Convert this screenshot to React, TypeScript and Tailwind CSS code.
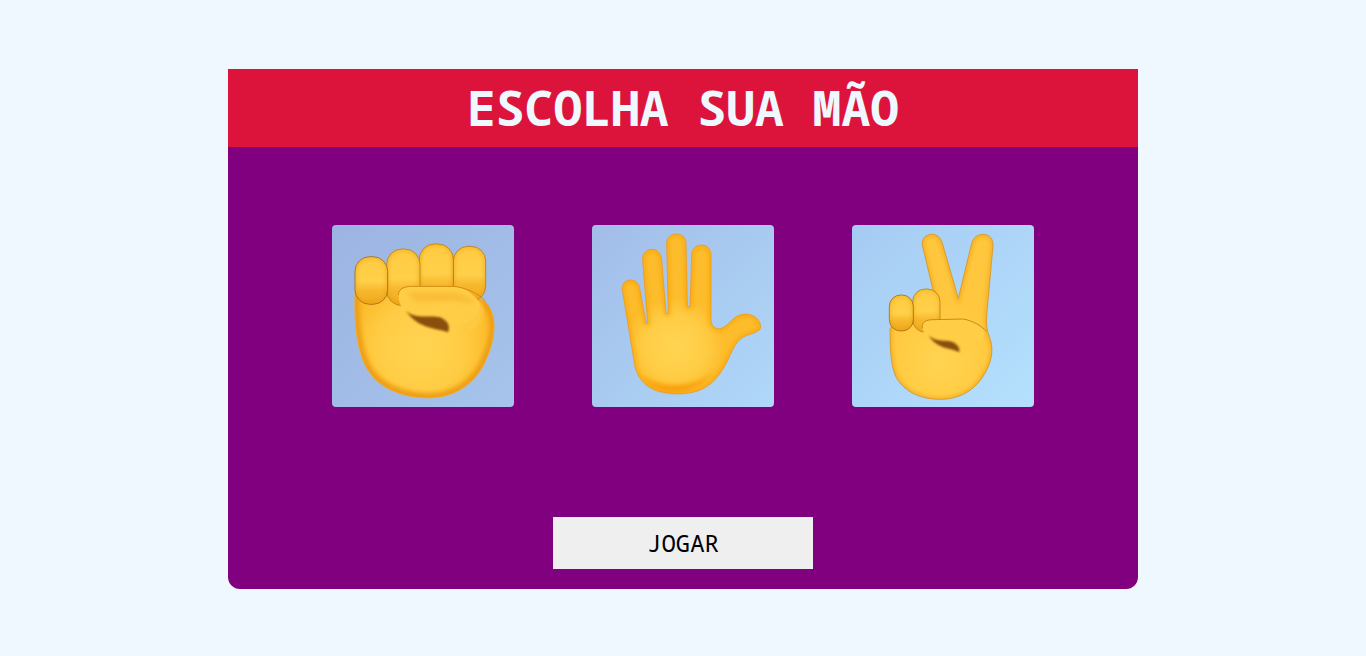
const pill = (x: number, y: number, w: number, h: number, r: number) =>
  `M${x} ${y + r}a${r} ${r} 0 0 1 ${r} ${-r}h${w - 2 * r}a${r} ${r} 0 0 1 ${r} ${r}v${h - 2 * r}a${r} ${r} 0 0 1 ${-r} ${r}h${-(w - 2 * r)}a${r} ${r} 0 0 1 ${-r} ${-r}z`;

const Defs = ({ id, cx, cy, r, end = "#fcbc2c" }: { id: string; cx: number; cy: number; r: number; end?: string }) => (
  <defs>
    <radialGradient id={`${id}-palm`} gradientUnits="userSpaceOnUse" cx={cx} cy={cy} r={r}>
      <stop offset="0" stopColor="#ffd452" />
      <stop offset="0.6" stopColor="#ffcd45" />
      <stop offset="1" stopColor={end} />
    </radialGradient>
    <linearGradient id={`${id}-finger`} x1="0" y1="0" x2="0" y2="1">
      <stop offset="0" stopColor="#ffcb42" />
      <stop offset="0.52" stopColor="#ffd04a" />
      <stop offset="0.7" stopColor="#f7b92e" />
      <stop offset="1" stopColor="#efa81e" />
    </linearGradient>
    <filter id={`${id}-blur`} x="-30%" y="-30%" width="160%" height="160%">
      <feGaussianBlur stdDeviation="6" />
    </filter>
    <filter id={`${id}-soft`} x="-30%" y="-30%" width="160%" height="160%">
      <feGaussianBlur stdDeviation="3" />
    </filter>
    <filter id={`${id}-wide`} x="-40%" y="-40%" width="180%" height="180%">
      <feGaussianBlur stdDeviation="10" />
    </filter>
  </defs>
);

// filled shape with a blurred inner rim, the way the emoji are shaded
const Soft = ({ id, group, d, fill, rim, width = 22, edge }: { id: string; group: string; d: string; fill: string; rim: string; width?: number; edge: string }) => (
  <g>
    <clipPath id={id}>
      <path d={d} />
    </clipPath>
    <g clipPath={`url(#${id})`}>
      <path d={d} fill={fill} />
      <path d={d} fill="none" stroke={rim} strokeWidth={width} filter={`url(#${group}-blur)`} />
    </g>
    <path d={d} fill="none" stroke={edge} strokeWidth="2.5" strokeLinejoin="round" />
  </g>
);

const fistPalm = "M105 230C103 300 106 370 125 425C145 490 205 545 320 549C405 550 470 505 500 430C522 380 530 325 514 288C506 268 495 258 480 250L200 225Z";
const peacePalm = "M247 90C245 70 258 58 275 58C292 58 302 68 307 85L355 250L395 85C400 68 412 58 430 58C448 58 460 72 459 92L440 300C438 325 440 345 448 365C460 395 458 430 440 465C410 525 360 553 300 553C240 553 195 530 170 490C155 460 150 420 150 340L285 250Z";

const FistIcon = () => (
  <svg viewBox="36 30 546 546" className="h-full w-full">
    <Defs id="fist" cx={300} cy={400} r={210} />
    <Soft id="fist-p" group="fist" d={fistPalm} fill="url(#fist-palm)" rim="#ee9f14" width={30} edge="#efae28" />
    <Soft id="fist-f4" group="fist" d={pill(400, 94, 97, 164, 44)} fill="url(#fist-finger)" rim="#e8a015" width={6} edge="#c07d10" />
    <Soft id="fist-f3" group="fist" d={pill(298, 87, 102, 170, 46)} fill="url(#fist-finger)" rim="#e8a015" width={6} edge="#c07d10" />
    <Soft id="fist-f2" group="fist" d={pill(200, 102, 100, 170, 46)} fill="url(#fist-finger)" rim="#e8a015" width={6} edge="#c07d10" />
    <Soft id="fist-f1" group="fist" d={pill(105, 125, 98, 143, 44)} fill="url(#fist-finger)" rim="#e8a015" width={6} edge="#a96c0d" />
    {/* thumb body, faded out into the palm on its right side */}
    <path
      d="M236 245C233 226 248 215 272 214L400 214C432 218 460 236 478 262C484 300 450 330 395 338C340 322 290 320 262 296C246 284 237 265 236 245Z"
      fill="#ffcd46"
    />
    <path d="M260 232L400 232C430 236 455 250 470 266L400 258L290 262Z" fill="#f7b832" filter="url(#fist-blur)" opacity="0.7" />
    <path d="M470 260C485 290 475 320 440 340" fill="none" stroke="#ffcd46" strokeWidth="20" filter="url(#fist-wide)" />
    <path d="M236 240C233 226 248 215 272 214L400 214C440 218 476 236 496 258" fill="none" stroke="#cf8c12" strokeWidth="3" />
    <path
      d="M258 288C290 316 330 298 360 307C382 315 392 334 384 352C350 338 298 345 258 288Z"
      fill="#8a4f08"
      filter="url(#fist-soft)"
    />
  </svg>
);

const HandIcon = () => (
  <svg viewBox="36 30 546 546" className="h-full w-full">
    <Defs id="hand" cx={285} cy={395} r={150} />
    <Soft
      id="hand-p"
      group="hand"
      d="M127 225C125 205 138 195 152 195C168 195 177 207 180 225L198 325L203 325L188 135C187 115 200 103 216 103C233 103 243 116 245 135L258 295L265 295L260 85C260 68 272 57 289 57C306 57 318 68 318 85L322 275L330 275L335 120C336 101 348 90 364 90C381 90 393 103 393 120L393 315C395 335 405 342 420 341C436 338 448 322 462 310C480 296 505 292 525 306C538 315 545 330 540 342C535 352 510 356 490 366C470 378 462 395 448 425C430 465 405 505 365 523C335 537 290 540 250 532C205 525 175 495 165 455Z"
      fill="url(#hand-palm)"
      rim="#faa90f"
      width={12}
      edge="#ee9a1c"
    />
    <path d="M185 480C225 520 345 525 400 470C380 500 340 530 285 532C240 530 205 515 185 480Z" fill="#f89f08" filter="url(#hand-blur)" />
  </svg>
);

const VictoryIcon = () => (
  <svg viewBox="36 30 546 546" className="h-full w-full">
    <Defs id="peace" cx={300} cy={440} r={180} end="#ffc73e" />
    <Soft id="peace-p" group="peace" d={peacePalm} fill="url(#peace-palm)" rim="#f0a81e" width={10} edge="#d9951a" />
    <Soft id="peace-f2" group="peace" d={pill(218, 222, 82, 130, 38)} fill="url(#peace-finger)" rim="#e8a015" width={5} edge="#bd7d10" />
    <Soft id="peace-f1" group="peace" d={pill(148, 240, 72, 108, 34)} fill="url(#peace-finger)" rim="#e8a015" width={5} edge="#a96c0d" />
    <path
      d="M246 335C245 322 258 314 280 314L370 312C400 318 420 335 430 352C436 380 410 400 358 406C335 388 300 385 275 372C258 365 248 350 246 335Z"
      fill="#ffcd46"
    />
    <path d="M247 340C244 322 258 314 280 314L370 312C400 318 425 332 440 350" fill="none" stroke="#c98a12" strokeWidth="3" />
    <path
      d="M266 362C295 385 325 372 340 382C354 390 360 400 358 412C335 398 295 405 266 362Z"
      fill="#8a4f08"
      filter="url(#peace-soft)"
    />
  </svg>
);

const hands = [
  { name: "pedra", Icon: FistIcon, bg: "bg-gradient-to-br from-[#9cb4e2] to-[#a6c4ec]" },
  { name: "papel", Icon: HandIcon, bg: "bg-gradient-to-br from-[#a2bde8] to-[#afd8f9]" },
  { name: "tesoura", Icon: VictoryIcon, bg: "bg-gradient-to-br from-[#a6cbf3] to-[#b4e0fd]" },
];

export default function App() {
  return (
    <div className="flex min-h-screen justify-center bg-[#f0f8ff] pt-[69px] font-['Noto_Sans_Mono','DejaVu_Sans_Mono',monospace]">
      <div className="flex h-[520px] w-[910px] flex-col overflow-hidden rounded-b-xl bg-[#800080]">
        <h1 className="flex h-[78px] items-center justify-center bg-[#dc143c] text-5xl font-bold text-[#f0f8ff]">
          ESCOLHA SUA MÃO
        </h1>

        <div className="flex justify-center gap-[78px] pt-[78px]">
          {hands.map(({ name, Icon, bg }) => (
            <div key={name} className={`h-[182px] w-[182px] overflow-hidden rounded-sm ${bg}`}>
              <Icon />
            </div>
          ))}
        </div>

        <button className="mt-auto mb-5 h-[52px] w-[260px] self-center bg-[#efefef] text-2xl text-black">
          JOGAR
        </button>
      </div>
    </div>
  );
}
